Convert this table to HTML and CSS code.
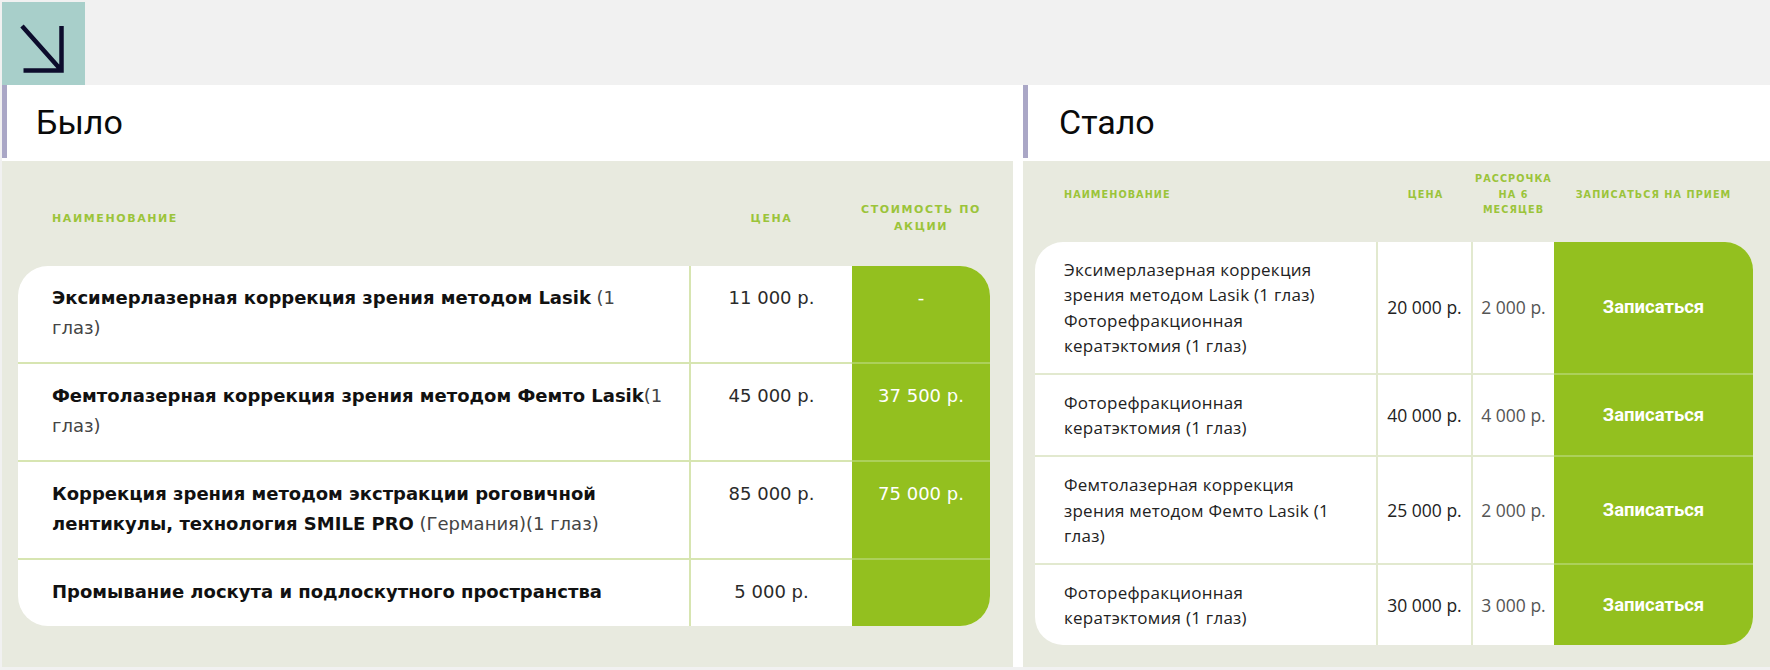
FILE: index.html
```html
<!DOCTYPE html>
<html lang="ru">
<head>
<meta charset="utf-8">
<title>Было / Стало</title>
<link rel="stylesheet" href="styles.css">
</head>
<body>
<div class="top">
  <div class="arrow-box">
    <svg width="83" height="83" viewBox="0 0 83 83" aria-hidden="true">
      <path d="M20 24 L59.5 68.5 M21.5 68.5 H59.5 V24" fill="none" stroke="#0c0c2c" stroke-width="4.5"/>
    </svg>
  </div>
</div>
<div class="panels">
  <section class="col col-left">
    <div class="head"><div class="title">Было</div></div>
    <div class="body body-old">
      <div class="thead old-grid">
        <div class="th th-name">НАИМЕНОВАНИЕ</div>
        <div class="th">ЦЕНА</div>
        <div class="th">СТОИМОСТЬ ПО<br>АКЦИИ</div>
      </div>
      <div class="card card-old old-grid">
        <div class="o-name"><b>Эксимерлазерная коррекция зрения методом Lasik</b> (1<br>глаз)</div>
        <div class="o-price">11 000 р.</div>
        <div class="o-promo">-</div>

        <div class="o-name sep"><b>Фемтолазерная коррекция зрения методом Фемто Lasik</b>(1<br>глаз)</div>
        <div class="o-price sep">45 000 р.</div>
        <div class="o-promo sep">37 500 р.</div>

        <div class="o-name sep"><b>Коррекция зрения методом экстракции роговичной<br>лентикулы, технология SMILE PRO</b> (Германия)(1 глаз)</div>
        <div class="o-price sep">85 000 р.</div>
        <div class="o-promo sep">75 000 р.</div>

        <div class="o-name sep"><b>Промывание лоскута и подлоскутного пространства</b></div>
        <div class="o-price sep">5 000 р.</div>
        <div class="o-promo sep"></div>
      </div>
    </div>
  </section>
  <section class="col col-right">
    <div class="head"><div class="title">Стало</div></div>
    <div class="body body-new">
      <div class="thead thead-new new-grid">
        <div class="th th-name">НАИМЕНОВАНИЕ</div>
        <div class="th">ЦЕНА</div>
        <div class="th">РАССРОЧКА<br>НА 6<br>МЕСЯЦЕВ</div>
        <div class="th">ЗАПИСАТЬСЯ НА ПРИЕМ</div>
      </div>
      <div class="card card-new new-grid">
        <div class="n-name">Эксимерлазерная коррекция<br>зрения методом Lasik (1 глаз)<br>Фоторефракционная<br>кератэктомия (1 глаз)</div>
        <div class="n-price">20 000 р.</div>
        <div class="n-inst">2 000 р.</div>
        <div class="n-btn">Записаться</div>

        <div class="n-name sep">Фоторефракционная<br>кератэктомия (1 глаз)</div>
        <div class="n-price sep">40 000 р.</div>
        <div class="n-inst sep">4 000 р.</div>
        <div class="n-btn sep">Записаться</div>

        <div class="n-name sep">Фемтолазерная коррекция<br>зрения методом Фемто Lasik (1<br>глаз)</div>
        <div class="n-price sep">25 000 р.</div>
        <div class="n-inst sep">2 000 р.</div>
        <div class="n-btn sep">Записаться</div>

        <div class="n-name sep">Фоторефракционная<br>кератэктомия (1 глаз)</div>
        <div class="n-price sep">30 000 р.</div>
        <div class="n-inst sep">3 000 р.</div>
        <div class="n-btn sep">Записаться</div>
      </div>
    </div>
  </section>
</div>
</body>
</html>
```

FILE: styles.css
```css
* { box-sizing: border-box; }

body {
  margin: 0;
  width: 1770px;
  height: 670px;
  overflow: hidden;
  background: #f1f1f1;
  font-family: "DejaVu Sans", sans-serif;
  color: #111;
}

.top {
  height: 85px;
  padding: 2px 0 0 2px;
}

.arrow-box {
  width: 83px;
  height: 83px;
  background: #a8cfca;
}

.arrow-box svg { display: block; }

.panels {
  display: flex;
  gap: 10px;
  margin-left: 2px;
  height: 582px;
  background: #fff;
}

.col {
  display: flex;
  flex-direction: column;
}

.col-left { width: 1011px; flex: none; }
.col-right { flex: 1; }

.head {
  height: 76px;
  padding-bottom: 3px;
  background: #fff;
}

.title {
  height: 73px;
  border-left: 5px solid #aaa7c6;
  padding-left: 29px;
  display: flex;
  align-items: center;
  font-family: Roboto, "Liberation Sans", sans-serif;
  font-size: 34px;
  color: #0a0a0a;
}

.col-right .title { padding-left: 31px; }

.body {
  flex: 1;
  background: #e8eadf;
}

/* ---------- old table ---------- */
.body-old {
  padding: 40px 0 0 16px;
}

.old-grid {
  display: grid;
  grid-template-columns: 673px 161px 138px;
  width: 972px;
}

.thead {
  align-items: center;
}

.th {
  font-family: "DejaVu Sans", sans-serif;
  font-weight: bold;
  font-size: 11px;
  letter-spacing: 1.6px;
  line-height: 17px;
  color: #9bc43a;
  text-align: center;
}

.th-name {
  text-align: left;
  padding-left: 34px;
}

.card {
  background: #fff;
  overflow: hidden;
}

.card-old {
  margin-top: 31px;
  border-radius: 30px;
}

.o-name, .o-price, .o-promo {
  font-size: 18px;
  line-height: 30px;
  padding-top: 17px;
  padding-bottom: 19px;
}

.o-name {
  padding-left: 34px;
  padding-right: 8px;
  border-right: 2px solid #d7e5b1;
  color: #444;
  white-space: nowrap;
}

.o-name b {
  color: #111;
  font-weight: bold;
}

.o-price {
  text-align: center;
  color: #2a2a2a;
}

.o-promo {
  text-align: center;
  background: #93c01f;
  color: #fff;
}

.sep { border-top: 2px solid #d7e5b1; }
.o-promo.sep, .n-btn.sep { border-top-color: #acd05a; }

/* ---------- new table ---------- */
.body-new {
  padding: 10px 0 0 12px;
}

.new-grid {
  display: grid;
  grid-template-columns: 343px 95px 81px 199px;
  width: 718px;
}

.thead-new .th {
  font-size: 9.7px;
  letter-spacing: 1.05px;
  line-height: 15.5px;
}

.thead-new .th-name { padding-left: 29px; }

.card-new {
  margin-top: 24px;
  border-radius: 28px;
}

.n-name {
  font-family: "Open Sans", sans-serif;
  font-size: 17px;
  letter-spacing: 0.25px;
  line-height: 25.6px;
  padding: 15px 4px 14px 29px;
  color: #222;
  white-space: nowrap;
  border-right: 2px solid #e2e9cf;
}

.n-price, .n-inst, .n-btn {
  display: flex;
  align-items: center;
  justify-content: center;
  font-family: "Open Sans", sans-serif;
  font-size: 17.5px;
  white-space: nowrap;
}

.n-price {
  color: #222;
  border-right: 2px solid #e2e9cf;
}

.n-inst { color: #555; }

.n-btn {
  background: #93c01f;
  color: #fff;
  font-family: Roboto, sans-serif;
  font-weight: bold;
  font-size: 18.5px;
}

.card-new .sep { border-top-color: #e2e9cf; }
.card-new .n-btn.sep { border-top-color: #acd05a; }
```
